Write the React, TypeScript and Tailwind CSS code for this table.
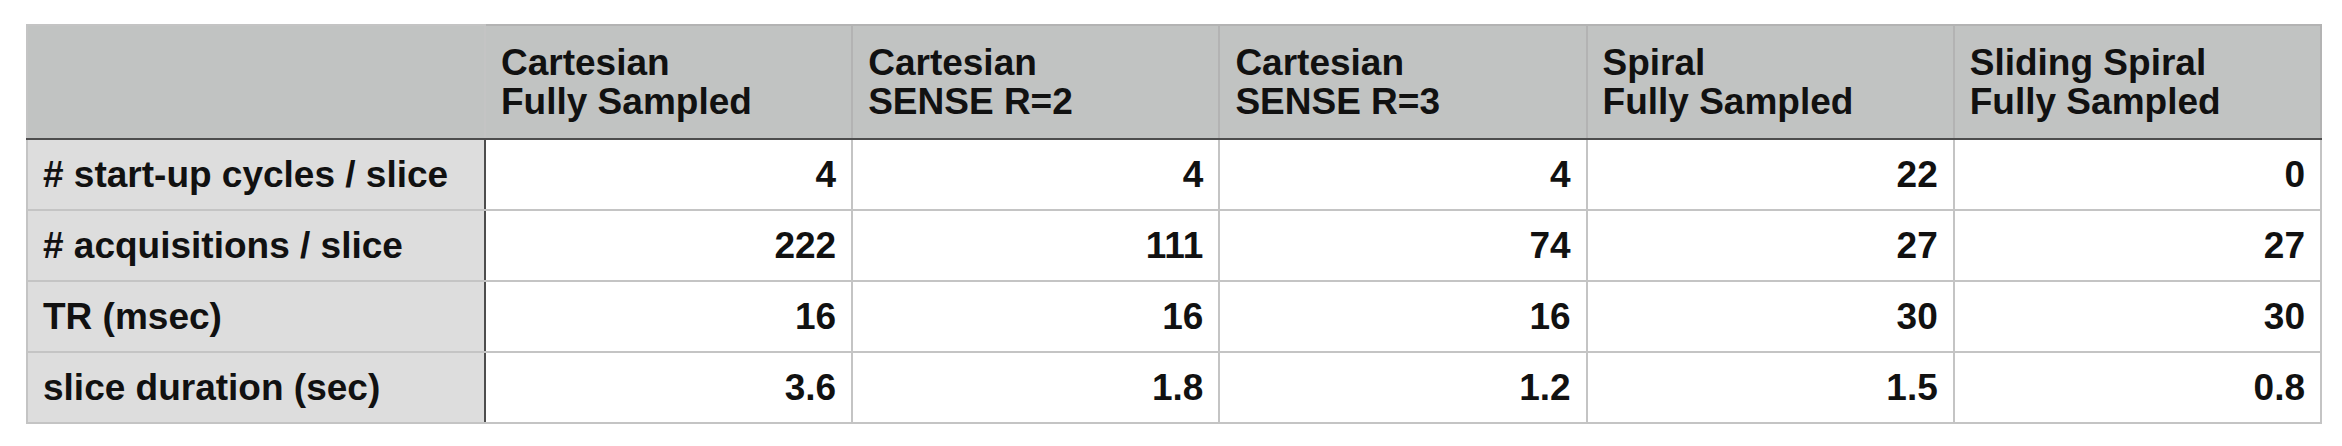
const headers = [
  ["Cartesian", "Fully Sampled"],
  ["Cartesian", "SENSE R=2"],
  ["Cartesian", "SENSE R=3"],
  ["Spiral", "Fully Sampled"],
  ["Sliding Spiral", "Fully Sampled"],
]

const rows: { label: string; values: string[] }[] = [
  { label: "# start-up cycles / slice", values: ["4", "4", "4", "22", "0"] },
  { label: "# acquisitions / slice", values: ["222", "111", "74", "27", "27"] },
  { label: "TR (msec)", values: ["16", "16", "16", "30", "30"] },
  { label: "slice duration (sec)", values: ["3.6", "1.8", "1.2", "1.5", "0.8"] },
]

export default function App() {
  return (
    <div className="w-[2342px] h-[446px] bg-white pt-[24px] pl-[26px]">
      <table className="table-fixed border-collapse w-[2296px] font-['Liberation_Sans',Arial,sans-serif] font-bold text-[37px] text-[#111]">
        <colgroup>
          <col className="w-[458px]" />
          <col />
          <col />
          <col />
          <col />
          <col />
        </colgroup>
        <thead>
          <tr className="h-[114px] bg-[#c1c3c2]">
            <th className="border-2 border-[#c4c4c4] border-b-[#4d4d4d]" />
            {headers.map((h, i) => (
              <th
                key={i}
                className="border-2 border-[#b3b3b3] border-b-[#4d4d4d] px-[15px] text-left align-middle font-bold leading-[39px]"
              >
                {h[0]}
                <br />
                {h[1]}
              </th>
            ))}
          </tr>
        </thead>
        <tbody>
          {rows.map((r, i) => (
            <tr key={i} className="h-[71px]">
              <td className="border-2 border-[#c4c4c4] border-r-[#4d4d4d] bg-[#dddddd] px-[15px] align-middle leading-none">
                {r.label}
              </td>
              {r.values.map((v, j) => (
                <td
                  key={j}
                  className="border-2 border-[#c4c4c4] bg-white px-[15px] text-right align-middle leading-none"
                >
                  {v}
                </td>
              ))}
            </tr>
          ))}
        </tbody>
      </table>
    </div>
  )
}
